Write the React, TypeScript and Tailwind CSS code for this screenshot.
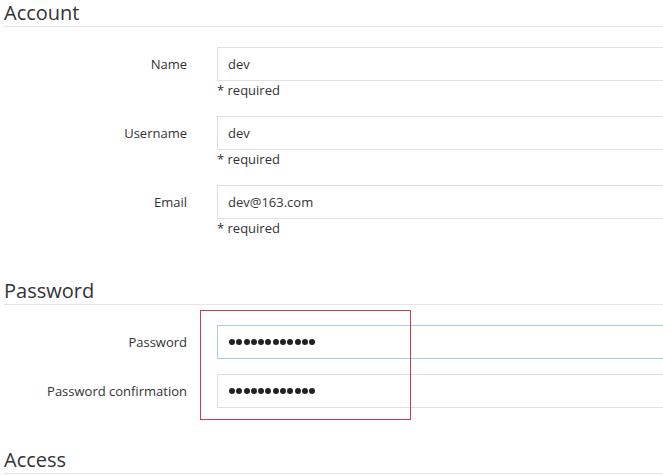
import React from "react";

function Heading({ children, className = "" }: { children: React.ReactNode; className?: string }) {
  return (
    <div
      className={`h-[27px] shrink-0 leading-[26px] border-b border-[#e5e5e5] text-[20px] text-[#333] mb-[20px] ${className}`}
    >
      {children}
    </div>
  );
}

function Row({
  label,
  value,
  help,
  focused,
  password,
  className = "",
}: {
  label: string;
  value?: string;
  help?: boolean;
  focused?: boolean;
  password?: boolean;
  className?: string;
}) {
  return (
    <div className={`flex items-start shrink-0 ${className}`}>
      <div className="w-[183px] shrink-0 text-right h-[34px] leading-[34px] text-[13px] text-[#333]">
        {label}
      </div>
      <div className="ml-[30px] w-[600px] shrink-0">
        <div
          className={`h-[34px] border ${
            focused ? "border-[#a9cbe9]" : "border-[#e0e0e0]"
          } pl-[10px] leading-[32px] text-[13px] text-[#333] flex items-center`}
        >
          {password ? (
            <div className="flex gap-[1.3px] ml-[1px]">
              {Array.from({ length: 12 }).map((_, i) => (
                <span key={i} className="block w-[6px] h-[6px] rounded-full bg-[#222]" />
              ))}
            </div>
          ) : (
            <span>{value}</span>
          )}
        </div>
        {help && <div className="h-[18px] leading-[18px] text-[13px] text-[#333]">* required</div>}
      </div>
    </div>
  );
}

export default function App() {
  return (
    <div className="w-[663px] h-[476px] overflow-hidden bg-white font-['Open_Sans',sans-serif]">
      <div className="pl-[4px] flex flex-col">
        <Heading>Account</Heading>
        <Row label="Name" value="dev" help className="mb-[17px]" />
        <Row label="Username" value="dev" help className="mb-[17px]" />
        <Row label="Email" value="dev@163.com" help className="mb-[17px]" />

        <Heading className="mt-[24px]">Password</Heading>
        <div className="relative flex flex-col shrink-0">
          <Row label="Password" password focused className="mb-[15px]" />
          <Row label="Password confirmation" password className="mb-[15px]" />
          <div className="absolute top-[-15px] left-[196px] w-[211px] h-[110px] border border-[#d13a4e] pointer-events-none" />
        </div>

        <Heading className="mt-[24px]">Access</Heading>
      </div>
    </div>
  );
}
